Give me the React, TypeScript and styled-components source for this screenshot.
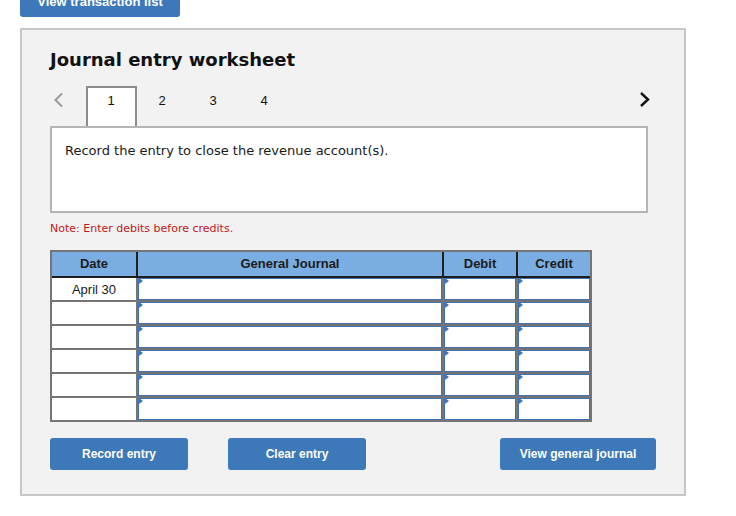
import React from "react";
import styled, { createGlobalStyle } from "styled-components";

const Global = createGlobalStyle`
  html, body { margin: 0; padding: 0; background: #ffffff; }
  body { font-family: "Liberation Sans", Arial, sans-serif; overflow: hidden; }
  * { box-sizing: border-box; }
`;

const Page = styled.div`
  padding-left: 20px;
  width: 736px;
  height: 516px;
`;

const TopButton = styled.button`
  display: block;
  width: 160px;
  height: 32px;
  margin-top: -15px;
  border: none;
  border-radius: 3px;
  background: #3d79ba;
  color: #ffffff;
  font: bold 13px "Liberation Sans", Arial, sans-serif;
  padding: 0;
`;

const Panel = styled.section`
  margin-top: 11px;
  width: 666px;
  height: 468px;
  border: 2px solid #c7c7c7;
  background: #f2f2f2;
  padding: 19px 28px 0 28px;
`;

const Title = styled.h1`
  margin: 0;
  font: bold 18px/22px "DejaVu Sans", Verdana, sans-serif;
  color: #111111;
`;

const TabRow = styled.div`
  margin-top: 15px;
  height: 40px;
  display: flex;
  align-items: flex-start;
`;

const Chevron = styled.div<{ $side: "left" | "right" }>`
  display: flex;
  align-items: flex-start;
  height: 40px;
  width: ${(p) => (p.$side === "left" ? "36px" : "14px")};
  padding-left: ${(p) => (p.$side === "left" ? "3px" : "0")};
  padding-top: ${(p) => (p.$side === "left" ? "6px" : "5px")};
  margin-left: ${(p) => (p.$side === "right" ? "auto" : "0")};
  margin-right: ${(p) => (p.$side === "right" ? "3px" : "0")};
`;

const Tab = styled.div<{ $active?: boolean }>`
  width: 51px;
  height: 40px;
  padding-top: 5px;
  padding-right: 1px;
  text-align: center;
  font: 13px/16px "Liberation Sans", Arial, sans-serif;
  color: #111111;
  background: ${(p) => (p.$active ? "#ffffff" : "transparent")};
  border: 2px solid ${(p) => (p.$active ? "#8c8c8c" : "transparent")};
  border-bottom: none;
`;

const Description = styled.div`
  width: 598px;
  height: 87px;
  border: 2px solid #b5b5b5;
  background: #ffffff;
  padding: 15px 13px 0 13px;
  font: 13px/16px "DejaVu Sans", Verdana, sans-serif;
  color: #1a1a1a;
`;

const Note = styled.p`
  margin: 9px 0 0 0;
  font: 11px/14px "DejaVu Sans", Verdana, sans-serif;
  color: #c4161c;
`;

const Table = styled.div`
  margin-top: 14px;
  width: 542px;
  border: 2px solid #757575;
  background: #757575;
`;

const columns = "84px 304px 72px 72px";

const HeaderRow = styled.div`
  display: grid;
  grid-template-columns: ${columns};
  column-gap: 2px;
  background: #1e1e1e;
  border-bottom: 2px solid #1e1e1e;
`;

const HeaderCell = styled.div`
  height: 24px;
  padding-bottom: 2px;
  background: #7aade1;
  display: flex;
  align-items: center;
  justify-content: center;
  font: bold 13px "Liberation Sans", Arial, sans-serif;
  color: #1c1c1c;
`;

const Body = styled.div`
  display: grid;
  row-gap: 2px;
`;

const Row = styled.div`
  display: grid;
  grid-template-columns: ${columns};
  column-gap: 2px;
`;

const DateCell = styled.div`
  height: 22px;
  background: #ffffff;
  display: flex;
  align-items: center;
  justify-content: center;
  font: 13px "Liberation Sans", Arial, sans-serif;
  color: #1a1a1a;
`;

const InputCell = styled.div`
  position: relative;
  height: 22px;
  &::before {
    content: "";
    position: absolute;
    left: 1px;
    top: 0px;
    width: 0;
    height: 0;
    border-top: 3px solid transparent;
    border-bottom: 3px solid transparent;
    border-left: 4px solid #3d79ba;
  }
`;

const Field = styled.input`
  display: block;
  width: 100%;
  height: 22px;
  margin: 0;
  padding: 0 4px;
  border: 1px solid #3f71b3;
  border-radius: 0;
  background: #ffffff;
  outline: none;
  font: 13px "Liberation Sans", Arial, sans-serif;
`;

const ButtonRow = styled.div`
  margin-top: 16px;
  display: flex;
  align-items: center;
`;

const ActionButton = styled.button<{ $width: number; $push?: boolean; $gap?: number }>`
  width: ${(p) => p.$width}px;
  height: 32px;
  margin-left: ${(p) => (p.$push ? "auto" : `${p.$gap ?? 0}px`)};
  border: none;
  border-radius: 3px;
  background: #3d78b8;
  color: #ffffff;
  font: bold 12px "Liberation Sans", Arial, sans-serif;
  padding: 0;
`;

const rows = ["April 30", "", "", "", "", ""];

export default function App() {
  return (
    <>
      <Global />
      <Page>
        <TopButton>View transaction list</TopButton>
        <Panel>
          <Title>Journal entry worksheet</Title>
          <TabRow>
            <Chevron $side="left">
              <svg width="12" height="16" viewBox="0 0 12 16">
                <path d="M9 1.5 L2.5 8 L9 14.5" fill="none" stroke="#9a9a9a" strokeWidth="2" />
              </svg>
            </Chevron>
            <Tab $active>1</Tab>
            <Tab>2</Tab>
            <Tab>3</Tab>
            <Tab>4</Tab>
            <Chevron $side="right">
              <svg width="12" height="16" viewBox="0 0 12 16">
                <path d="M2 2 L9 8.5 L2 15" fill="none" stroke="#111111" strokeWidth="2.4" />
              </svg>
            </Chevron>
          </TabRow>
          <Description>Record the entry to close the revenue account(s).</Description>
          <Note>Note: Enter debits before credits.</Note>
          <Table>
            <HeaderRow>
              <HeaderCell>Date</HeaderCell>
              <HeaderCell>General Journal</HeaderCell>
              <HeaderCell>Debit</HeaderCell>
              <HeaderCell>Credit</HeaderCell>
            </HeaderRow>
            <Body>
              {rows.map((d, i) => (
                <Row key={i}>
                  <DateCell>{d}</DateCell>
                  <InputCell><Field type="text" aria-label="General Journal" /></InputCell>
                  <InputCell><Field type="text" aria-label="Debit" /></InputCell>
                  <InputCell><Field type="text" aria-label="Credit" /></InputCell>
                </Row>
              ))}
            </Body>
          </Table>
          <ButtonRow>
            <ActionButton $width={138}>Record entry</ActionButton>
            <ActionButton $width={138} $gap={40}>Clear entry</ActionButton>
            <ActionButton $width={156} $push>View general journal</ActionButton>
          </ButtonRow>
        </Panel>
      </Page>
    </>
  );
}
